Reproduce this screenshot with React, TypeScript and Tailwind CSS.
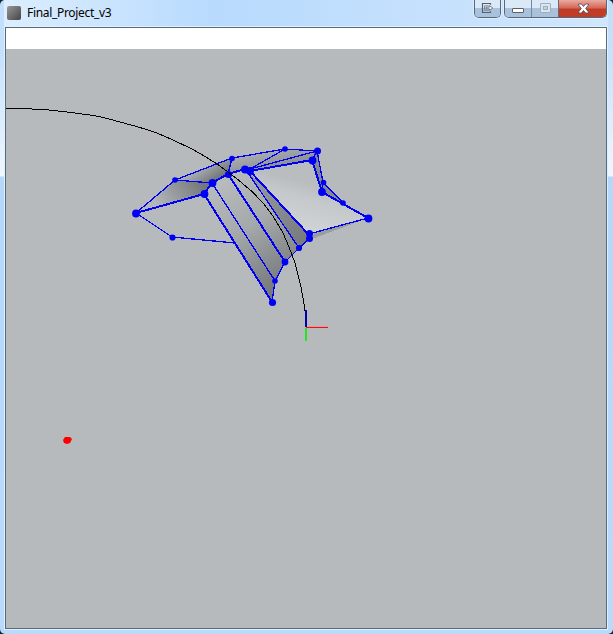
const blue = '#0000f4';

const faces: [string, string][] = [
  ['136,213 175,180 212,183 204,194', 'url(#wing)'],
  ['175,180 232,158 228,174 212,183', 'url(#ridge)'],
  ['232,158 285,149 245,169 228,174', 'url(#crest)'],
  ['285,149 317,151 312,160 250,170 245,169', 'url(#crest)'],
  ['204,194 212,183 275,281 272,302', 'url(#band)'],
  ['212,183 228,174 285,262 275,281', 'url(#band)'],
  ['228,174 246,169 299,248 285,262', 'url(#band)'],
  ['246,169 309,234 309,239 299,248', 'url(#shade)'],
  ['250,170 312,160 322,192 368,218 309,234', 'url(#light)'],
  ['317,151 323,182 343,203 322,192 312,160', '#858a90'],
  ['309,235 368,218 309,240', '#999da0'],
];

const thick = [
  '136,213 204,194 212,183 228,174 245,169 250,171 312,160 322,192 368,218',
  '204,194 272,302',
  '228,174 285,262',
  '249,170 309,235',
];

const thin = [
  '204,194 136,213 175,180 232,158 285,149 317,151 323,182 343,203',
  '175,180 212,183 275,281',
  '232,158 228,174',
  '285,149 250,169 317,151 312,160',
  '246,170 299,248',
  '309,234 368,218',
  '272,302 275,281 285,262 299,248 309,239 309,234',
  '136,213 172,237 235,243',
  '323,182 322,192',
];

const dots: [number, number, number][] = [
  [136, 213.5, 4], [204.5, 194, 4], [212.5, 183, 4], [228.5, 174.5, 3.7],
  [245, 169.5, 4], [250, 171, 4], [312.5, 160.5, 4], [317.5, 151, 3.6],
  [322, 192, 4], [368.5, 218.5, 4], [309.5, 233.5, 3.6], [309.5, 238.5, 3.6],
  [299, 248, 3.2], [285, 262, 3.5], [275, 281, 2.9], [272.5, 302.5, 3.7],
  [175, 180, 2.9], [232, 158.5, 2.9], [285, 149, 2.9], [172.5, 237.5, 3.2],
  [323.5, 182.5, 2.9], [343, 203, 2.9],
];

function Scene() {
  return (
    <svg viewBox="6 49 600 579" className="block h-[579px] w-[600px] shrink-0 bg-[#b6babd]">
      <defs>
        <linearGradient id="wing" gradientUnits="userSpaceOnUse" x1="158" y1="207" x2="199" y2="178">
          <stop offset="0" stopColor="#b4b8bb" />
          <stop offset=".55" stopColor="#919496" />
          <stop offset="1" stopColor="#747779" />
        </linearGradient>
        <linearGradient id="ridge" gradientUnits="userSpaceOnUse" x1="200" y1="167" x2="211" y2="184">
          <stop offset="0" stopColor="#aeb2b4" />
          <stop offset="1" stopColor="#707376" />
        </linearGradient>
        <linearGradient id="crest" gradientUnits="userSpaceOnUse" x1="265" y1="150" x2="269" y2="169">
          <stop offset="0" stopColor="#abafb1" />
          <stop offset="1" stopColor="#8c9093" />
        </linearGradient>
        <linearGradient id="band" gradientUnits="userSpaceOnUse" x1="218" y1="181" x2="280" y2="286">
          <stop offset="0" stopColor="#b8bcbd" />
          <stop offset=".45" stopColor="#a5a9ab" />
          <stop offset="1" stopColor="#77797b" />
        </linearGradient>
        <linearGradient id="shade" gradientUnits="userSpaceOnUse" x1="250" y1="175" x2="306" y2="240">
          <stop offset="0" stopColor="#989c9e" />
          <stop offset="1" stopColor="#777b7e" />
        </linearGradient>
        <linearGradient id="light" gradientUnits="userSpaceOnUse" x1="296" y1="180" x2="284" y2="226">
          <stop offset="0" stopColor="#b9bdbf" />
          <stop offset=".3" stopColor="#c4c8ca" />
          <stop offset="1" stopColor="#d0d4d6" />
        </linearGradient>
      </defs>
      <g shapeRendering="crispEdges">
        {faces.map(([points, fill]) => <polygon key={points} points={points} fill={fill} />)}
        <g fill="none" stroke={blue}>
          {thin.map((points) => <polyline key={points} points={points} strokeWidth="1.3" />)}
          {thick.map((points) => <polyline key={points} points={points} strokeWidth="2" />)}
        </g>
      </g>
      {dots.map(([x, y, r]) => <circle key={`${x}-${y}`} cx={x} cy={y} r={r - 0.1} fill={blue} />)}
      <g shapeRendering="crispEdges">
        <polyline
          fill="none"
          stroke="#000"
          points="6,109 19,108.5 45,109.5 67,112 94,115.5 108,118.7 120,122 140,127.5 157,133 173,140 192,149 205,156.5 217,164 226,170.5 236,178 252,191.5 263,203 273,216 283,233 289,247 295,263 301,287 304,304 306,318 306,327"
        />
        <rect x="305" y="310" width="2" height="17" fill="#0000aa" />
        <rect x="305" y="328" width="2" height="13" fill="#22e622" />
        <rect x="307" y="326" width="21" height="1" fill="#e59398" />
        <rect x="306" y="327" width="22" height="1" fill="#e8141c" />
      </g>
      <polygon points="65,437 70,437 72,439 70,443 67,444 64,443 63,440" fill="#f00" />
    </svg>
  );
}

function Controls() {
  const cell = 'flex h-full items-center justify-center bg-linear-to-b from-[#dbe9f7] from-45% to-[#a9c1da] to-50%';
  return (
    <div className="flex h-[18px] items-start gap-[3px]">
      <div className="h-[18px] w-[27px] overflow-hidden rounded-b-[5px] border border-t-0 border-[#536981] shadow-[0_0_0_1px_#ddeeff]">
        <div className={cell}>
          <svg width="13" height="12" viewBox="0 0 13 12" fill="none" className="-mt-px">
            <path d="M9.5 2.8V1.5h-8v9h8V9.2" stroke="#596170" strokeWidth="1.2" />
            <path d="M7.5 3.8h-4v4.4h4" stroke="#7b8594" strokeWidth=".9" />
            <path d="M5 5.2h3.3V3.6L11.8 6 8.3 8.4V6.8H5z" fill="#f8fafc" stroke="#596170" strokeWidth=".8" />
          </svg>
        </div>
      </div>
      <div className="flex h-[18px] w-[103px] overflow-hidden rounded-b-[5px] border border-t-0 border-[#536981] shadow-[0_0_0_1px_#ddeeff]">
        <div className={`${cell} w-[27px] border-r border-[#7188a1]`}>
          <div className="mt-[4px] h-[5px] w-3 rounded-[1px] border border-[#5b6069] bg-white" />
        </div>
        <div className={`${cell} w-[27px] border-r border-[#6c6674]`}>
          <div className="-mt-px flex h-[10px] w-[11px] items-center justify-center rounded-[1px] border border-[#9eaebd] bg-[#dbe5ef]">
            <div className="h-1 w-[5px] border border-[#9eaebd] bg-[#c3d3e2]" />
          </div>
        </div>
        <div className="flex h-full flex-1 items-center justify-center bg-linear-to-b from-[#e9aaa0] via-[#d4695a] via-45% to-[#c13c24] to-55%">
          <svg width="13" height="11" viewBox="0 0 13 11" className="-mt-px ml-px">
            <path d="M1.5 1h3l2 2.5 2-2.5h3v1L8.7 5.5l2.8 3.5v1h-3l-2-2.5-2 2.5h-3V9l2.8-3.5L1.5 2z" fill="#fff" stroke="#555262" strokeWidth=".9" />
          </svg>
        </div>
      </div>
    </div>
  );
}

export default function App() {
  return (
    <div className="h-[634px] w-[613px] overflow-hidden bg-[#14202c] font-['Noto_Sans','Open_Sans',sans-serif]">
      <div className="flex h-full flex-col overflow-hidden rounded-[5px] bg-[linear-gradient(to_bottom,#bfdefb_0px,#c6e1fc_55px,#eff7ff_176px,#b5d7fa_177px,#b9dafb_634px)] pb-1 pl-1 pr-[5px]">
        <header className="flex h-[26px] shrink-0 items-start justify-between bg-linear-to-r from-[#dceeff] from-0% via-[#b8dafd] via-35% to-[#d0e6fd] pl-[3px] pr-px">
          <div className="flex h-[26px] items-center gap-[6px]">
            <div className="h-[14px] w-[14px] rounded-[2px] bg-linear-to-br from-[#989898] via-[#6e6e6e] to-[#454545]" />
            <span className="text-[12px] leading-[26px] tracking-[-0.32px] text-black">Final_Project_v3</span>
          </div>
          <Controls />
        </header>
        <main className="min-h-0 flex-1 overflow-hidden border border-[#e1f2ff]">
          <div className="flex h-full flex-col border border-[#586b7d]">
            <div className="h-[21px] shrink-0 bg-white" />
            <Scene />
          </div>
        </main>
      </div>
    </div>
  );
}
